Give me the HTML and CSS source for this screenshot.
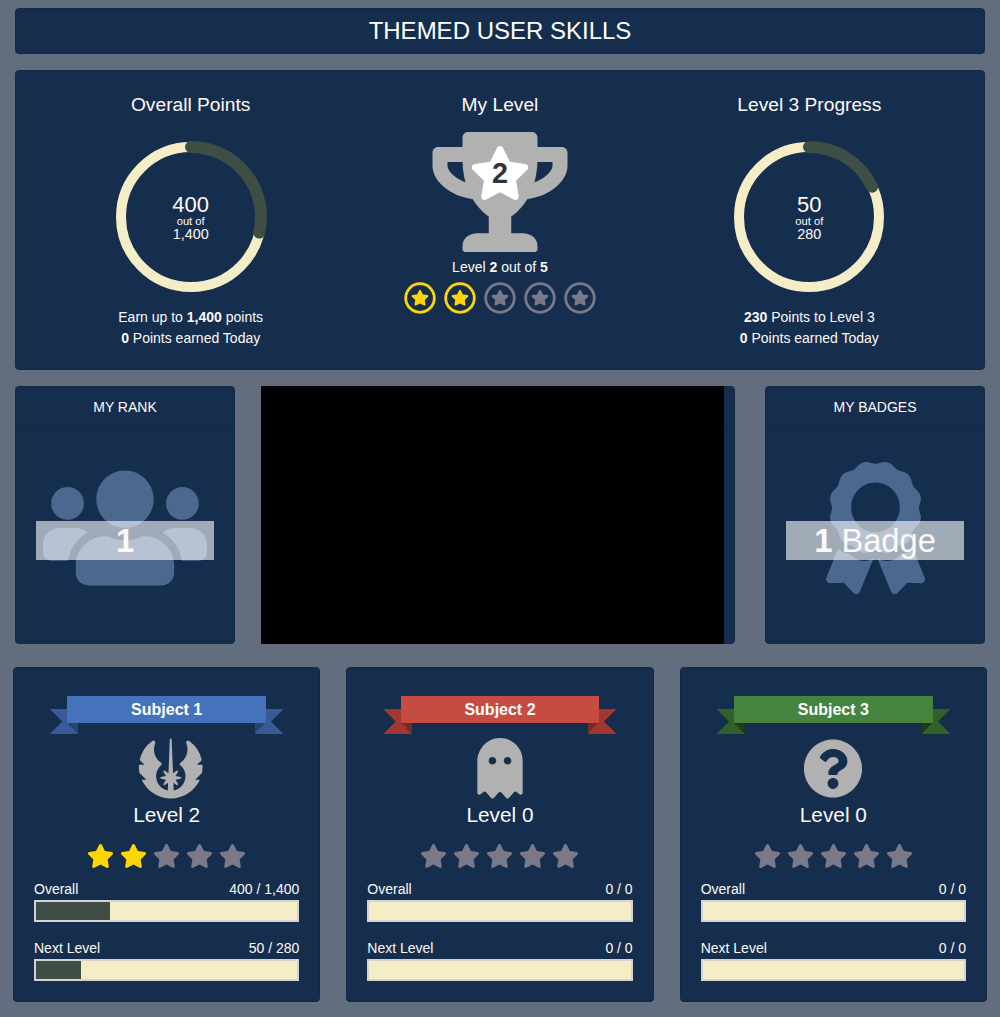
FILE: index.html
```html
<!DOCTYPE html>
<html lang="en">
<head>
<meta charset="utf-8">
<title>Themed User Skills</title>
<link rel="stylesheet" href="styles.css">
</head>
<body>
<svg class="defs" aria-hidden="true">
  <symbol id="star" viewBox="0 0 576 512"><path d="M259.3 17.8L194 150.2 47.9 171.5c-26.2 3.8-36.7 36.1-17.7 54.6l105.7 103-25 145.5c-4.5 26.3 23.2 46 46.4 33.7L288 439.6l130.7 68.7c23.2 12.2 50.9-7.4 46.4-33.7l-25-145.5 105.7-103c19-18.5 8.5-50.8-17.7-54.6L382 150.2 316.7 17.8c-11.7-23.6-45.6-23.9-57.4 0z"/></symbol>
  <symbol id="ringstar" viewBox="0 0 32 32"><circle cx="16" cy="16" r="14.3" fill="none" stroke="currentColor" stroke-width="2.8"/><use href="#star" x="7" y="7.7" width="18" height="16"/></symbol>
</svg>
<header class="panel title">THEMED USER SKILLS</header>

<section class="panel overview">
  <div class="stat">
    <h2>Overall Points</h2>
    <div class="dial">
      <svg viewBox="0 0 152 152"><circle class="track" cx="76" cy="76" r="70"/><path class="arc" d="M76 6A70 70 0 0 1 144.2 91.6"/></svg>
      <div class="dial-text"><b>400</b><i>out of</i><span>1,400</span></div>
    </div>
    <p>Earn up to <strong>1,400</strong> points</p>
    <p><strong>0</strong> Points earned Today</p>
  </div>
  <div class="stat level">
    <h2>My Level</h2>
    <div class="trophy">
      <svg class="cup" viewBox="0 0 576 512"><path d="M552 64H448V24c0-13.3-10.7-24-24-24H152c-13.3 0-24 10.7-24 24v40H24C10.7 64 0 74.7 0 88v56c0 35.7 22.5 72.4 61.9 100.7 31.5 22.7 69.8 37.1 110 41.7C203.3 338.5 240 360 240 360v72h-48c-35.3 0-64 20.7-64 56v12c0 6.6 5.4 12 12 12h296c6.6 0 12-5.4 12-12v-12c0-35.3-28.7-56-64-56h-48v-72s36.7-21.5 68.1-73.6c40.3-4.6 78.6-19 110-41.7 39.3-28.3 61.9-65 61.9-100.7V88c0-13.3-10.7-24-24-24zM99.3 192.8C74.9 175.2 64 155.6 64 144v-16h64.2c1 32.6 5.8 61.2 12.8 86.2-15.1-5.2-29.2-12.4-41.7-21.4zM512 144c0 16.1-17.7 36.1-35.3 48.8-12.5 9-26.7 16.2-41.8 21.4 7-25 11.8-53.6 12.8-86.2H512v16z"/></svg>
      <svg class="cup-star"><use href="#star"/></svg>
      <span class="cup-num">2</span>
    </div>
    <p>Level <strong>2</strong> out of <strong>5</strong></p>
    <div class="ring-stars">
      <svg class="on"><use href="#ringstar"/></svg><svg class="on"><use href="#ringstar"/></svg><svg><use href="#ringstar"/></svg><svg><use href="#ringstar"/></svg><svg><use href="#ringstar"/></svg>
    </div>
  </div>
  <div class="stat">
    <h2>Level 3 Progress</h2>
    <div class="dial">
      <svg viewBox="0 0 152 152"><circle class="track" cx="76" cy="76" r="70"/><path class="arc" d="M76 6A70 70 0 0 1 139.1 45.7"/></svg>
      <div class="dial-text"><b>50</b><i>out of</i><span>280</span></div>
    </div>
    <p><strong>230</strong> Points to Level 3</p>
    <p><strong>0</strong> Points earned Today</p>
  </div>
</section>

<section class="middle">
  <div class="panel tile">
    <h3>MY RANK</h3>
    <div class="tile-body">
      <svg class="big" viewBox="0 0 640 512" width="164" height="132"><path d="M96 224c35.3 0 64-28.7 64-64s-28.7-64-64-64-64 28.7-64 64 28.7 64 64 64zm448 0c35.3 0 64-28.7 64-64s-28.7-64-64-64-64 28.7-64 64 28.7 64 64 64zm32 32h-64c-17.6 0-33.5 7.1-45.1 18.6 40.3 22.1 68.9 62 75.1 109.4h66c17.7 0 32-14.3 32-32v-32c0-35.3-28.7-64-64-64zm-256 0c61.9 0 112-50.1 112-112S381.9 32 320 32 208 82.1 208 144s50.1 112 112 112zm76.8 32h-8.3c-20.8 10-43.9 16-68.5 16s-47.6-6-68.5-16h-8.3C179.6 288 128 339.6 128 403.2V432c0 26.5 21.5 48 48 48h288c26.5 0 48-21.5 48-48v-28.8c0-63.6-51.6-115.2-115.2-115.2zm-223.7-13.4C161.5 263.1 145.6 256 128 256H64c-35.3 0-64 28.7-64 64v32c0 17.7 14.3 32 32 32h65.9c6.3-47.4 34.9-87.3 75.2-109.4z"/></svg>
      <div class="strip"><strong>1</strong></div>
    </div>
  </div>
  <div class="panel chart"><h3></h3><div class="screen"></div></div>
  <div class="panel tile">
    <h3>MY BADGES</h3>
    <div class="tile-body">
      <svg class="big" viewBox="0 0 384 512" width="99" height="132"><path d="M97.12 362.63c-8.69-8.69-4.16-6.24-25.12-11.85-9.51-2.55-17.87-7.45-25.43-13.32L1.2 448.7c-4.39 10.77 3.81 22.47 15.43 22.03l52.69-2.01L105.56 507c8 8.44 22.04 5.81 26.43-4.96l52.05-127.62c-10.84 6.04-22.87 9.58-35.31 9.58-19.5 0-37.82-7.59-51.61-21.37zM382.8 448.7l-45.37-111.24c-7.56 5.88-15.92 10.77-25.43 13.32-21.07 5.64-16.45 3.18-25.12 11.85-13.79 13.78-32.12 21.37-51.62 21.37-12.44 0-24.47-3.55-35.31-9.58L252 502.04c4.39 10.77 18.44 13.4 26.43 4.96l36.25-38.28 52.69 2.01c11.62.44 19.82-11.27 15.43-22.03zM263 340c15.28-15.55 17.03-14.21 38.79-20.14 13.89-3.79 24.75-14.84 28.47-28.98 7.48-28.4 5.54-24.97 25.95-45.75 10.17-10.35 14.14-25.44 10.42-39.58-7.47-28.38-7.48-24.42 0-52.83 3.72-14.14-.25-29.23-10.42-39.58-20.41-20.78-18.47-17.36-25.95-45.75-3.72-14.14-14.58-25.19-28.47-28.98-27.88-7.61-24.52-5.62-44.95-26.41-10.17-10.35-25-14.4-38.89-10.61-27.87 7.6-23.98 7.61-51.9 0-13.89-3.79-28.72.25-38.89 10.61-20.41 20.78-17.05 18.8-44.94 26.41-13.89 3.79-24.75 14.84-28.47 28.98-7.47 28.39-5.54 24.97-25.95 45.75-10.17 10.35-14.15 25.44-10.42 39.58 7.47 28.36 7.48 24.4 0 52.82-3.72 14.14.25 29.23 10.42 39.59 20.41 20.78 18.47 17.35 25.95 45.75 3.72 14.14 14.58 25.19 28.47 28.98C104.6 325.96 106.27 325 121 340c13.23 13.47 33.84 15.88 49.74 5.82a39.676 39.676 0 0 1 42.53 0c15.89 10.06 36.5 7.65 49.73-5.82zM97.66 175.96c0-53.03 42.24-96.02 94.34-96.02s94.34 42.99 94.34 96.02-42.24 96.02-94.34 96.02-94.34-42.99-94.34-96.02z"/></svg>
      <div class="strip"><strong>1</strong> Badge</div>
    </div>
  </div>
</section>

<section class="subjects">
  <article class="panel subject blue">
    <div class="ribbon"><span>Subject 1</span></div>
    <div class="icon-box"><svg class="jedi" viewBox="0 0 576 512"><path d="M535.953 352c-42.641 94.172-137.641 160-247.985 160q-6.398 0-12.844-.297C171.156 506.938 81.265 442.234 40.015 352H79.937L21.327 293.406a264.825 264.825 0 0 1-5.109-39.422 273.665 273.665 0 0 1 .5-29.984H63.937L22.546 182.625A269.798 269.798 0 0 1 130.515 20.547a16.064 16.064 0 0 1 9.281-3 16.363 16.363 0 0 1 13.5 7.25 16.027 16.027 0 0 1 1.625 15.094 138.387 138.387 0 0 0-9.844 51.266c0 45.109 21.047 86.578 57.719 113.734a16.3 16.3 0 0 1 1.203 25.391c-26.547 23.984-41.172 56.5-41.172 91.578 0 60.031 42.953 110.281 99.891 121.922l2.5-65.266L238.062 397a8.339 8.339 0 0 1-10-.75 8.025 8.025 0 0 1-1.391-9.938l20.125-33.766-42.063-8.734a7.99 7.99 0 0 1 0-15.656l42.063-8.719-20.109-33.734a7.991 7.991 0 0 1 11.359-10.719L268.437 295.641 279.953 7.672a7.971 7.971 0 0 1 8-7.672h.047a8.021 8.021 0 0 1 7.953 7.703L307.484 295.625l30.391-20.672a8.083 8.083 0 0 1 10 .813 7.999 7.999 0 0 1 1.391 9.906L329.125 319.438l42.078 8.734a7.994 7.994 0 0 1 0 15.656l-42.078 8.719 20.109 33.734a7.978 7.978 0 0 1-1.328 9.922A8.257 8.257 0 0 1 337.875 397L310.703 378.531l2.5 65.344c48.484-9.406 87.578-48.156 97.313-96.5A123.527 123.527 0 0 0 371.953 230.297a16.306 16.306 0 0 1 1.203-25.422c36.656-27.172 57.688-68.609 57.688-113.734a138.017 138.017 0 0 0-9.859-51.313 15.981 15.981 0 0 1 1.609-15.094 16.369 16.369 0 0 1 13.5-7.234 16.025 16.025 0 0 1 9.25 2.984A271.269 271.269 0 0 1 553.25 182.766L512 224h46.953a273.93 273.93 0 0 1-4.563 69.391L496.031 352Z"/></svg></div>
    <h4>Level 2</h4>
    <div class="stars"><svg class="on"><use href="#star"/></svg><svg class="on"><use href="#star"/></svg><svg><use href="#star"/></svg><svg><use href="#star"/></svg><svg><use href="#star"/></svg></div>
    <div class="row"><span>Overall</span><span>400 / 1,400</span></div>
    <div class="bar"><div style="width:28.4%"></div></div>
    <div class="row"><span>Next Level</span><span>50 / 280</span></div>
    <div class="bar"><div style="width:17.3%"></div></div>
  </article>
  <article class="panel subject red">
    <div class="ribbon"><span>Subject 2</span></div>
    <div class="icon-box"><svg class="ghost" viewBox="0 0 384 512"><path d="M186.1.09C81.01 3.24 0 94.92 0 200.05v263.92c0 14.26 17.23 21.39 27.31 11.31l24.92-18.53c6.66-4.95 16-3.99 21.51 2.21l42.95 48.35c6.25 6.25 16.38 6.25 22.63 0l40.72-45.85c6.37-7.17 17.56-7.17 23.92 0l40.72 45.85c6.25 6.25 16.38 6.25 22.63 0l42.95-48.35c5.51-6.2 14.85-7.17 21.51-2.21l24.92 18.53c10.08 10.08 27.31 2.94 27.31-11.31V192C384 84 294.83-3.17 186.1.09zM128 224c-17.67 0-32-14.33-32-32s14.33-32 32-32 32 14.33 32 32-14.33 32-32 32zm128 0c-17.67 0-32-14.33-32-32s14.33-32 32-32 32 14.33 32 32-14.33 32-32 32z"/></svg></div>
    <h4>Level 0</h4>
    <div class="stars"><svg><use href="#star"/></svg><svg><use href="#star"/></svg><svg><use href="#star"/></svg><svg><use href="#star"/></svg><svg><use href="#star"/></svg></div>
    <div class="row"><span>Overall</span><span>0 / 0</span></div>
    <div class="bar"></div>
    <div class="row"><span>Next Level</span><span>0 / 0</span></div>
    <div class="bar"></div>
  </article>
  <article class="panel subject green">
    <div class="ribbon"><span>Subject 3</span></div>
    <div class="icon-box"><svg class="question" viewBox="0 0 512 512"><path d="M504 256c0 136.997-111.043 248-248 248S8 392.997 8 256C8 119.083 119.043 8 256 8s248 111.083 248 248zM262.655 90c-54.497 0-89.255 22.957-116.549 63.758-3.536 5.286-2.353 12.415 2.715 16.258l34.699 26.31c5.205 3.947 12.621 3.008 16.665-2.122 17.864-22.658 30.113-35.797 57.303-35.797 20.429 0 45.698 13.148 45.698 32.958 0 14.976-12.363 22.667-32.534 33.976C247.128 238.528 216 254.941 216 296v4c0 6.627 5.373 12 12 12h56c6.627 0 12-5.373 12-12v-1.333c0-28.462 83.186-29.647 83.186-106.667 0-58.002-60.165-102-116.531-102zM256 338c-25.365 0-46 20.635-46 46 0 25.364 20.635 46 46 46s46-20.636 46-46c0-25.365-20.635-46-46-46z"/></svg></div>
    <h4>Level 0</h4>
    <div class="stars"><svg><use href="#star"/></svg><svg><use href="#star"/></svg><svg><use href="#star"/></svg><svg><use href="#star"/></svg><svg><use href="#star"/></svg></div>
    <div class="row"><span>Overall</span><span>0 / 0</span></div>
    <div class="bar"></div>
    <div class="row"><span>Next Level</span><span>0 / 0</span></div>
    <div class="bar"></div>
  </article>
</section>
</body>
</html>
```
FILE: styles.css
```css
* { box-sizing: border-box; }
body {
  margin: 0;
  padding: 8px 15px 15px;
  background: #626d7d;
  color: #fdf9f9;
  font: 14px/21px "Liberation Sans", Arial, sans-serif;
}
h2, h3, h4, p { margin: 0; font-weight: 400; }
svg { display: block; fill: currentColor; }
.defs { position: absolute; width: 0; height: 0; }
.panel {
  background: #152e4d;
  border: 1px solid #132842;
  border-radius: 4px;
}

.title {
  height: 46px;
  font-size: 24px;
  line-height: 44px;
  text-align: center;
  color: #fff;
}

.overview {
  display: grid;
  grid-template-columns: 1fr 1fr 1fr;
  height: 300px;
  margin-top: 16px;
  padding: 19px 20px 0;
  text-align: center;
}
.overview h2 { font-size: 19.2px; line-height: 29px; }
.dial {
  display: grid;
  justify-items: center;
  width: 152px;
  height: 152px;
  margin: 22px auto 14px;
}
.dial svg, .dial-text { grid-area: 1 / 1; }
.dial svg { width: 152px; height: 152px; }
.track { fill: none; stroke: #f5edc6; stroke-width: 10; }
.arc { fill: none; stroke: #3f4e44; stroke-width: 12; stroke-linecap: round; }
.dial-text {
  display: flex;
  flex-direction: column;
  align-items: center;
  padding-top: 51px;
}
.dial-text b { font-weight: 400; font-size: 22px; line-height: 26px; }
.dial-text i { font-style: normal; font-size: 11.2px; line-height: 9px; margin-top: -1px; }
.dial-text span { font-size: 14.4px; line-height: 16px; }
.trophy {
  position: relative;
  width: 136px;
  height: 120px;
  margin: 13px auto 5px;
}
.cup { width: 136px; height: 120px; color: #b1b1b1; }
.cup-star { position: absolute; left: 37px; top: 14px; width: 62px; height: 54px; color: #fff; }
.cup-num {
  position: absolute;
  left: 0;
  top: 24px;
  width: 136px;
  font-size: 28.8px;
  line-height: 34px;
  font-weight: 700;
  color: #333;
}
.ring-stars { display: flex; justify-content: center; gap: 8px; margin-top: 4px; }
.ring-stars svg { width: 32px; height: 32px; color: #7b7887; }
.ring-stars .on, .stars .on { color: #ffd700; }

.middle {
  display: grid;
  grid-template-columns: 220px 470px 220px;
  justify-content: space-between;
  height: 258px;
  margin-top: 16px;
}
.middle h3 {
  height: 41px;
  border-bottom: 1px solid #132842;
  font-size: 14px;
  line-height: 40px;
  text-align: center;
}
.tile-body { display: grid; justify-items: center; padding: 34px 20px 0; }
.big { grid-area: 1 / 1; color: #4c688f; }
.strip {
  grid-area: 1 / 1;
  width: 178px;
  height: 39px;
  margin-top: 59px;
  background: rgba(255, 255, 255, .6);
  font-size: 32.67px;
  line-height: 40px;
  text-align: center;
  z-index: 1;
}
.chart { display: grid; }
.chart h3, .screen { grid-area: 1 / 1; }
.screen { width: 463px; height: 258px; margin: -1px 0 -1px -5px; background: #000; z-index: 1; }

.subjects {
  display: grid;
  grid-template-columns: repeat(3, 1fr);
  column-gap: 26px;
  margin: 23px -2px 0;
}
.subject { height: 335px; padding: 28px 20px 0; }
.blue { --main: #4472bb; --tail: #375b96; --fold: #2a4571; }
.red { --main: #c64b40; --tail: #a13730; --fold: #782a25; }
.green { --main: #45843e; --tail: #316029; --fold: #1f3c1a; }
.ribbon {
  position: relative;
  width: 198.7px;
  height: 27px;
  margin: 0 auto;
}
.ribbon span {
  position: relative;
  z-index: 1;
  display: block;
  background: var(--main);
  color: #fff;
  font-size: 16px;
  line-height: 27px;
  font-weight: 700;
  text-align: center;
}
.ribbon::before, .ribbon::after {
  content: "";
  position: absolute;
  top: 13px;
  width: 28.5px;
  height: 25px;
  background: linear-gradient(to top right, var(--tail) 50%, var(--fold) 50%) 100% 100% / 11px 11px no-repeat, var(--tail);
  clip-path: polygon(0 0, 100% 0, 100% 100%, 0 100%, 12.5px 50%);
}
.ribbon::before { left: -17.5px; }
.ribbon::after { right: -17.5px; transform: scaleX(-1); }
.icon-box { width: 60px; height: 60px; margin: 15px auto 0; color: #b1b1b1; }
.icon-box svg { height: 61px; }
.jedi { width: 67.5px; }
.ghost { width: 46px; margin: 0 auto; }
.icon-box .ghost { height: 60.5px; }
.question { width: 60px; }
.subject h4 { margin-top: 1px; font-size: 20.8px; line-height: 31px; text-align: center; }
.stars { display: flex; justify-content: center; gap: 6px; margin: 14px 0 11px; }
.stars svg { width: 27px; height: 24px; color: #7b7887; }
.row { display: flex; justify-content: space-between; line-height: 21px; }
.bar {
  height: 22px;
  margin-bottom: 16px;
  border: 2px solid #d3d3d3;
  background: #f5edc6;
}
.bar div { height: 100%; background: #3f4e44; }
```
